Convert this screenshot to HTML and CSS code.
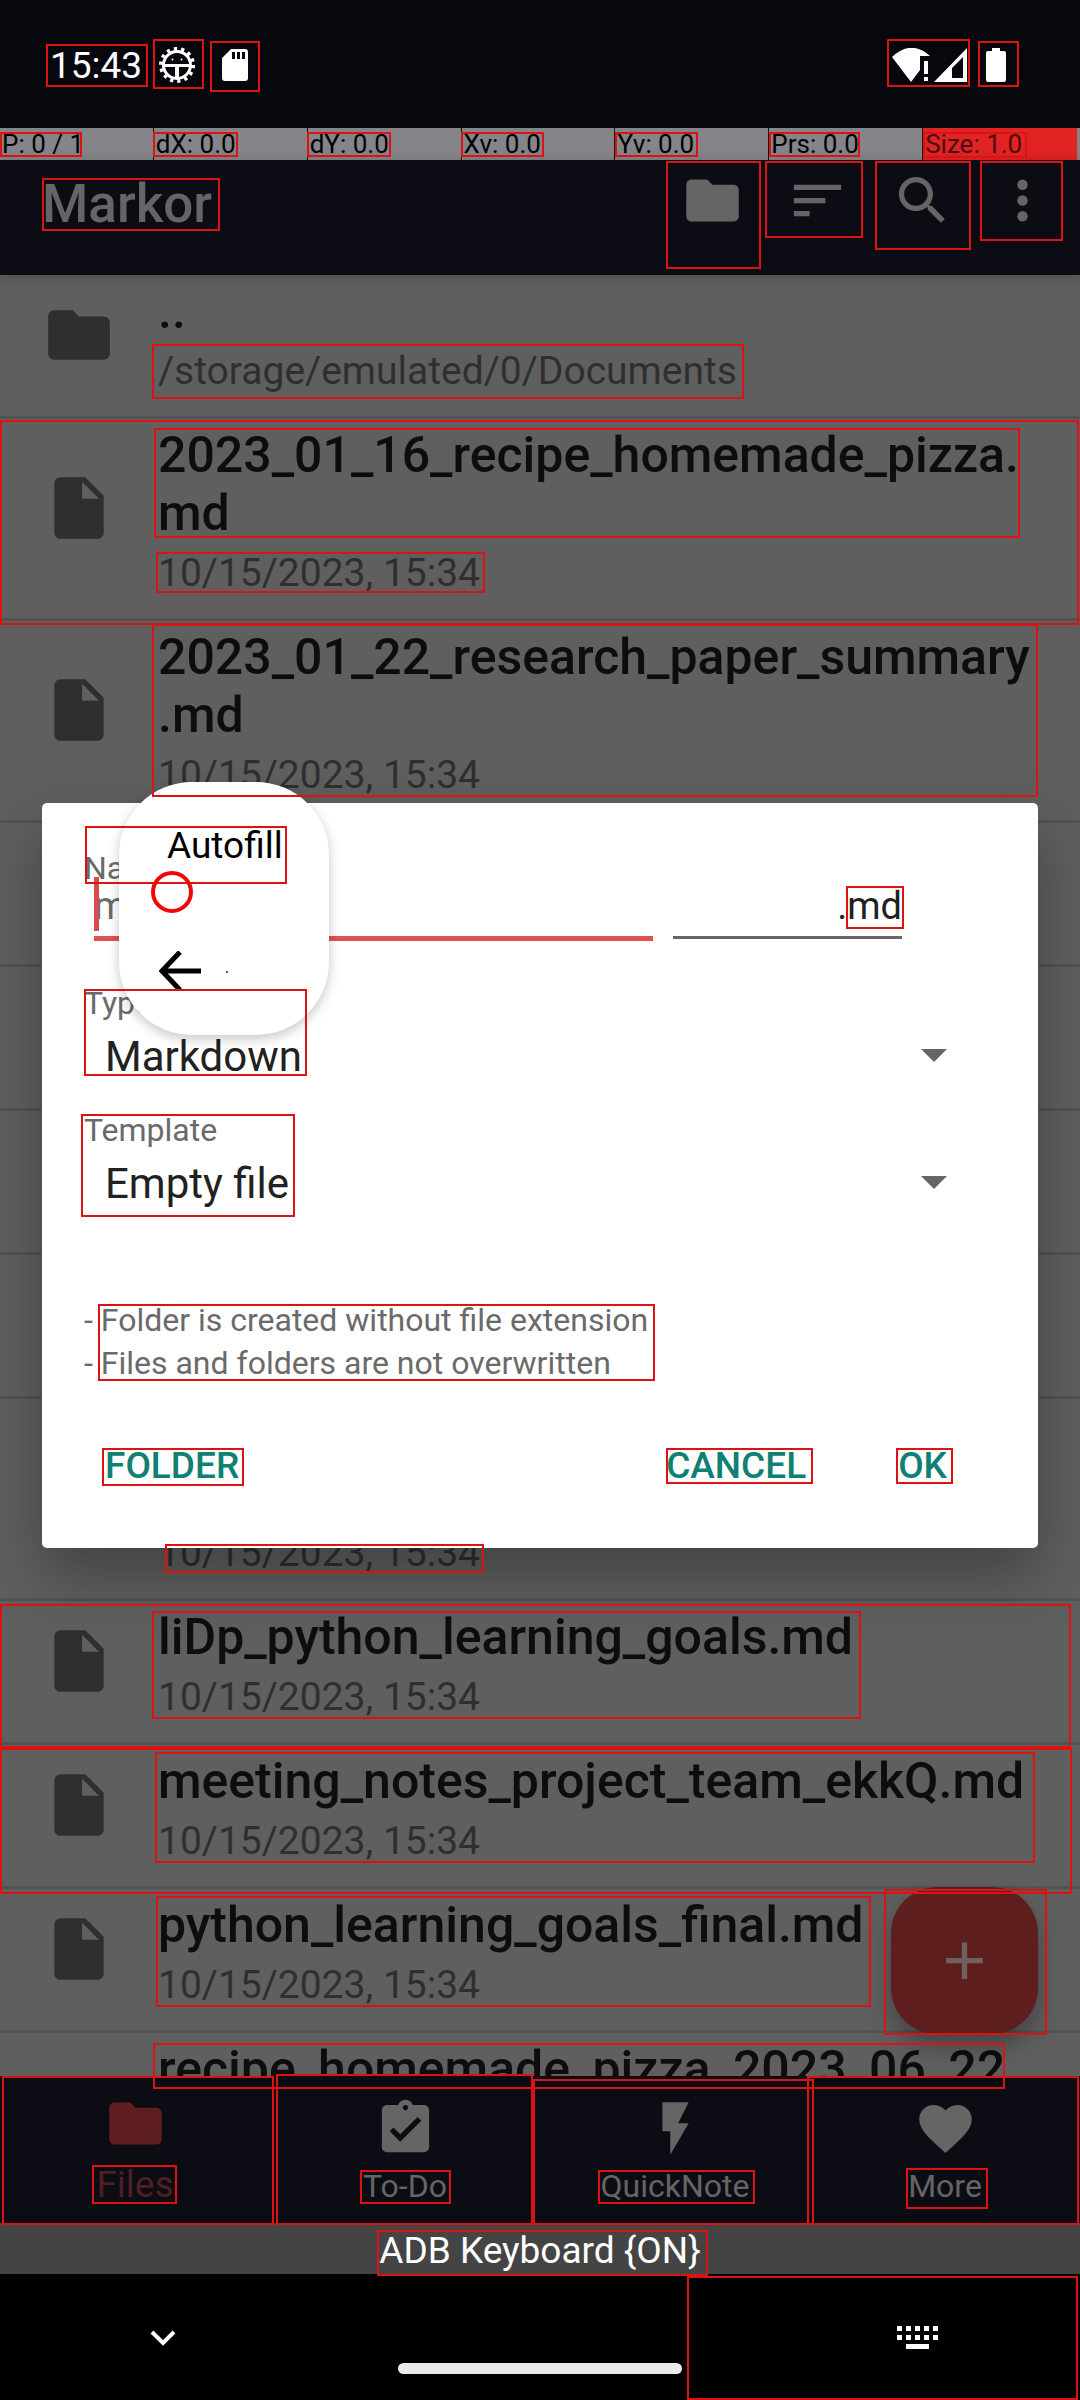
FILE: index.html
```html
<!DOCTYPE html>
<html lang="en">
<head>
<meta charset="utf-8">
<meta name="viewport" content="width=device-width">
<title>Markor</title>
<link rel="stylesheet" href="styles.css">
</head>
<body>
<svg class="defs" aria-hidden="true">
  <symbol id="folder" viewBox="0 0 24 24"><path d="M10 4H4c-1.100 0-1.990.900-1.990 2L2 18c0 1.100.900 2 2 2h16c1.100 0 2-.900 2-2V8c0-1.100-.900-2-2-2h-8l-2-2z"/></symbol>
  <symbol id="file" viewBox="0 0 24 24"><path fill-rule="evenodd" d="M6 2c-1.100 0-2 .900-2 2v16c0 1.100.900 2 2 2h12c1.100 0 2-.900 2-2V8l-6-6H6zm7 7V3.500L18.500 9H13z"/></symbol>
</svg>
<div class="screen">
  <header class="status">
    <div class="status-group">
      <time class="clock">15:43</time>
      <svg class="bug" viewBox="0 0 36 36">
        <circle cx="18" cy="18" r="13.500" fill="none" stroke="#fff" stroke-width="3"/>
        <circle cx="18" cy="18" r="16" fill="none" stroke="#fff" stroke-width="4" stroke-dasharray="3.200 3.980"/>
        <path d="M5 17h26v3H20v12h-4V20H5z" fill="#fff"/>
        <circle cx="13.500" cy="12.500" r="1" fill="#fff"/><circle cx="22.500" cy="12.500" r="1" fill="#fff"/>
      </svg>
      <svg class="card" viewBox="0 0 26 32"><path fill="#fff" fill-rule="evenodd" d="M9 0h14a3 3 0 0 1 3 3v26a3 3 0 0 1-3 3H3a3 3 0 0 1-3-3V9zM10 3v7h3V3zm5 0v7h3V3zm5 0v7h3V3z"/></svg>
    </div>
    <div class="status-group">
      <svg class="wifi" viewBox="0 0 38 34"><path fill="#fff" d="M0 9Q19-9 38 8H28v14l-9 12zM32 13h4v13h-4zM32 29h4v4h-4z"/></svg>
      <svg class="signal" viewBox="0 0 33 34"><path fill="#fff" fill-rule="evenodd" d="M33 0v34H0zM29 9L18 20v10h11z"/></svg>
      <svg class="battery" viewBox="0 0 20 34"><path fill="#fff" d="M6 0h8v3h4a2 2 0 0 1 2 2v27a2 2 0 0 1-2 2H2a2 2 0 0 1-2-2V5a2 2 0 0 1 2-2h4z"/></svg>
    </div>
  </header>

  <main class="app">
    <div class="pointer">
      <span>P: 0 / 1</span><span>dX: 0.0</span><span>dY: 0.0</span><span>Xv: 0.0</span><span>Yv: 0.0</span><span>Prs: 0.0</span><span class="pointer-hot">Size: 1.0</span>
    </div>
    <div class="appbar">
      <h1>Markor</h1>
      <button class="tool" aria-label="Go to"><svg class="icon" viewBox="0 0 24 24"><use href="#folder"/></svg></button>
      <button class="tool" aria-label="Sort"><svg class="icon" viewBox="0 0 24 24"><path d="M3 18h6v-2H3v2zM3 6v2h18V6H3zm0 7h12v-2H3v2z"/></svg></button>
      <button class="tool" aria-label="Search"><svg class="icon" viewBox="0 0 24 24"><path d="M15.500 14h-.790l-.280-.270C15.410 12.590 16 11.110 16 9.500 16 5.910 13.090 3 9.500 3S3 5.910 3 9.500 5.910 16 9.500 16c1.610 0 3.090-.590 4.230-1.570l.270.280v.790l5 4.990L20.490 19l-4.990-5zm-6 0C7.010 14 5 11.990 5 9.500S7.010 5 9.500 5 14 7.010 14 9.500 11.990 14 9.500 14z"/></svg></button>
      <button class="tool tool-more" aria-label="More options"><svg class="icon" viewBox="0 0 24 24"><circle cx="12" cy="6" r="2"/><circle cx="12" cy="12" r="2"/><circle cx="12" cy="18" r="2"/></svg></button>
    </div>

    <ul class="files">
      <li><svg class="file-icon"><use href="#folder"/></svg><div class="entry"><b>..</b><span>/storage/emulated/0/Documents</span></div></li>
      <li><svg class="file-icon"><use href="#file"/></svg><div class="entry"><b>2023_01_16_recipe_homemade_pizza.<br>md</b><span>10/15/2023, 15:34</span></div></li>
      <li><svg class="file-icon"><use href="#file"/></svg><div class="entry"><b>2023_01_22_research_paper_summary<br>.md</b><span>10/15/2023, 15:34</span></div></li>
      <li></li>
      <li></li>
      <li></li>
      <li></li>
      <li class="tall"><svg class="file-icon"><use href="#file"/></svg><div class="entry"><span>10/15/2023, 15:34</span></div></li>
      <li><svg class="file-icon"><use href="#file"/></svg><div class="entry"><b>liDp_python_learning_goals.md</b><span>10/15/2023, 15:34</span></div></li>
      <li><svg class="file-icon"><use href="#file"/></svg><div class="entry"><b>meeting_notes_project_team_ekkQ.md</b><span>10/15/2023, 15:34</span></div></li>
      <li><svg class="file-icon"><use href="#file"/></svg><div class="entry"><b>python_learning_goals_final.md</b><span>10/15/2023, 15:34</span></div></li>
      <li class="tall"><div class="entry entry-top"><b>recipe_homemade_pizza_2023_06_22</b></div></li>
    </ul>

    <nav class="tabs">
      <button class="tab tab-on"><svg class="icon" viewBox="0 0 24 24"><use href="#folder"/></svg><span>Files</span></button>
      <button class="tab"><svg class="icon" viewBox="0 0 24 24"><path d="M19 3h-4.180C14.400 1.840 13.300 1 12 1c-1.300 0-2.400.840-2.820 2H5c-1.100 0-2 .900-2 2v14c0 1.100.900 2 2 2h14c1.100 0 2-.900 2-2V5c0-1.100-.900-2-2-2zm-7 0c.550 0 1 .450 1 1s-.450 1-1 1-1-.450-1-1 .450-1 1-1zm-2 14l-4-4 1.410-1.410L10 14.170l6.590-6.590L18 9l-8 8z"/></svg><span>To-Do</span></button>
      <button class="tab"><svg class="icon" viewBox="0 0 24 24"><path d="M7 2v11h3v9l7-12h-4l4-8z"/></svg><span>QuickNote</span></button>
      <button class="tab"><svg class="icon" viewBox="0 0 24 24"><path d="M12 21.350l-1.450-1.320C5.400 15.360 2 12.280 2 8.500 2 5.420 4.420 3 7.500 3c1.740 0 3.410.810 4.500 2.090C13.090 3.810 14.760 3 16.500 3 19.580 3 22 5.420 22 8.500c0 3.780-3.400 6.860-8.550 11.540L12 21.350z"/></svg><span>More</span></button>
      <button class="fab" aria-label="New file"><svg class="icon" viewBox="0 0 24 24"><path d="M19 13h-6v6h-2v-6H5v-2h6V5h2v6h6v2z"/></svg></button>
    </nav>

    <div class="overlay">
      <form class="dialog">
        <label for="name">Name</label>
        <div class="name-row">
          <div class="name-field"><input id="name" type="text" placeholder="my_note"><i class="caret"></i></div>
          <input class="ext" type="text" value=".md" aria-label="Extension">
        </div>
        <label for="type">Type</label>
        <div class="select"><select id="type"><option>Markdown</option></select><svg viewBox="0 0 26 13"><path d="M0 0h26L13 13z"/></svg></div>
        <label for="template">Template</label>
        <div class="select"><select id="template"><option>Empty file</option></select><svg viewBox="0 0 26 13"><path d="M0 0h26L13 13z"/></svg></div>
        <p class="notes">- Folder is created without file extension<br>- Files and folders are not overwritten</p>
        <div class="actions">
          <button type="button" class="action-first">FOLDER</button>
          <button type="button">CANCEL</button>
          <button type="button">OK</button>
        </div>
        <div class="popup">
          <span>Autofill</span>
          <svg viewBox="0 0 70 40"><path d="M21 1L3 20l18 19M3 20h39" fill="none" stroke="#000" stroke-width="5"/><circle cx="68" cy="21" r="1" fill="#422"/></svg>
        </div>
      </form>
    </div>
  </main>

  <div class="ime">ADB Keyboard {ON}</div>
  <footer class="sysnav">
    <button aria-label="Hide keyboard"><svg class="chevron" viewBox="0 0 26 16"><path d="M2 2l11 11L24 2" fill="none" stroke="#fff" stroke-width="4"/></svg></button>
    <i class="pill"></i>
    <button aria-label="Switch keyboard"><svg class="keys" viewBox="0 0 41 23"><path fill="#fff" d="M0 0h5v5H0zM9 0h5v5H9zM18 0h5v5h-5zM27 0h5v5h-5zM36 0h5v5h-5zM0 9h5v5H0zM9 9h5v5H9zM18 9h5v5h-5zM27 9h5v5h-5zM36 9h5v5h-5zM9 18h23v5H9z"/></svg></button>
  </footer>

  <svg class="marks" aria-hidden="true">
    <rect x="47" y="45" width="100" height="41"/>
    <rect x="154" y="40" width="49" height="48"/>
    <rect x="211" y="42" width="48" height="49"/>
    <rect x="888" y="40" width="81" height="46"/>
    <rect x="979" y="42" width="39" height="44"/>
    <rect x="1" y="133" width="80" height="23"/>
    <rect x="154" y="133" width="83" height="23"/>
    <rect x="308" y="133" width="82" height="23"/>
    <rect x="462" y="133" width="81" height="23"/>
    <rect x="616" y="133" width="81" height="23"/>
    <rect x="770" y="133" width="89" height="23"/>
    <rect x="924" y="133" width="102" height="24"/>
    <rect x="43" y="179" width="176" height="51"/>
    <rect x="667" y="162" width="93" height="106"/>
    <rect x="766" y="162" width="96" height="75"/>
    <rect x="876" y="162" width="94" height="87"/>
    <rect x="981" y="162" width="81" height="78"/>
    <rect x="153" y="345" width="590" height="53"/>
    <rect x="1" y="421" width="1077" height="203"/>
    <rect x="155" y="429" width="864" height="108"/>
    <rect x="157" y="553" width="327" height="39"/>
    <rect x="153" y="625" width="884" height="171"/>
    <rect x="86" y="827" width="200" height="56"/>
    <circle cx="172" cy="892" r="19" class="touch"/>
    <rect x="85" y="990" width="221" height="85"/>
    <rect x="82" y="1115" width="212" height="101"/>
    <rect x="847" y="887" width="56" height="41"/>
    <rect x="99" y="1305" width="555" height="75"/>
    <rect x="103" y="1449" width="140" height="36"/>
    <rect x="667" y="1449" width="145" height="34"/>
    <rect x="897" y="1449" width="55" height="34"/>
    <rect x="166" y="1545" width="317" height="27"/>
    <rect x="1" y="1605" width="1069" height="142"/>
    <rect x="153" y="1612" width="707" height="106"/>
    <rect x="1" y="1749" width="1070" height="144"/>
    <rect x="156" y="1753" width="878" height="109"/>
    <rect x="157" y="1897" width="713" height="109"/>
    <rect x="885" y="1890" width="161" height="144"/>
    <rect x="154" y="2044" width="850" height="44"/>
    <rect x="3" y="2077" width="270" height="147"/>
    <rect x="277" y="2075" width="255" height="149"/>
    <rect x="534" y="2080" width="279" height="144"/>
    <rect x="808" y="2077" width="270" height="147"/>
    <rect x="93" y="2166" width="83" height="37"/>
    <rect x="361" y="2171" width="89" height="32"/>
    <rect x="599" y="2171" width="155" height="32"/>
    <rect x="907" y="2169" width="80" height="39"/>
    <rect x="378" y="2231" width="329" height="44"/>
    <rect x="688" y="2277" width="389" height="122"/>
  </svg>
</div>
</body>
</html>
```
FILE: styles.css
```css
* { box-sizing: border-box; }
body { margin: 0; font-family: Roboto, sans-serif; background: #000; }
button, input, select { font: inherit; color: inherit; border: 0; padding: 0; margin: 0; background: none; border-radius: 0; outline: 0; }
svg { display: block; fill: currentColor; }
.defs { position: absolute; width: 0; height: 0; }

.screen { position: relative; display: flex; flex-direction: column; height: 100vh; overflow: hidden; }

/* system status bar */
.status { display: flex; justify-content: space-between; height: 128px; padding: 44px 74px 0 50px; background: #07080d; color: #fff; }
.status-group { display: flex; align-items: center; height: 42px; }
.clock { width: 109px; padding-top: 2px; font-size: 37px; line-height: 44px; }
.bug { width: 36px; height: 36px; }
.card { width: 26px; height: 32px; margin-left: 27px; }
.wifi { width: 38px; height: 34px; }
.signal { width: 33px; height: 34px; margin: 0 19px 0 4px; }
.battery { width: 20px; height: 34px; }

.app { position: relative; flex: 1; min-height: 0; display: flex; flex-direction: column; }

/* pointer location readout */
.pointer { display: grid; grid-template-columns: repeat(7, 1fr); height: 32px; padding-right: 3px; background: #858589; color: #000; font-size: 26px; line-height: 33px; }
.pointer span { padding-left: 2px; border-right: 1px solid #111218; white-space: nowrap; }
.pointer .pointer-hot { background: #e12323; border-color: #e12323; color: #4d0d10; }

.appbar { position: relative; z-index: 1; display: flex; height: 115px; padding: 0 10px 0 42px; background: #0c0d14; color: #656565; box-shadow: 0 2px 12px rgba(0, 0, 0, .2); }
.appbar h1 { flex: 1; margin: 13px 0 0; font-size: 53px; line-height: 62px; font-weight: 500; }
.icon { width: 63px; height: 63px; }
.tool { display: flex; justify-content: center; width: 105px; padding-top: 9px; }
.tool-more { width: 95px; }

/* file list */
.files { flex: 1; min-height: 0; overflow: hidden; margin: 0; padding: 0; list-style: none; background: #5f5f5f; }
.files li { display: flex; align-items: center; min-height: 144px; padding: 0 0 21px 42px; border-bottom: 3px solid #535353; }
.files .tall { min-height: 202px; }
.file-icon { width: 74px; height: 74px; color: #2f2f2f; }
.entry { display: flex; flex-direction: column; gap: 8px; padding: 7px 0 1px; margin-left: 42px; color: #2f2f2f; font-size: 39px; line-height: 46px; }
.entry b { color: #0d0d0d; font-size: 50px; line-height: 58px; font-weight: 500; white-space: nowrap; }
.tall .entry { align-self: flex-end; }
.tall .entry-top { align-self: flex-start; margin-left: 116px; }

.tabs { position: relative; z-index: 1; display: grid; grid-template-columns: repeat(4, 1fr); height: 147px; background: #0c0d14; color: #656565; }
.tab { display: flex; flex-direction: column; align-items: center; justify-content: space-between; padding: 21px 0 18px; font-size: 32px; line-height: 38px; }
.tab-on { padding: 16px 0 17px; color: #5f1e20; }
.tab-on span { font-size: 37px; line-height: 42px; color: #4f1f23; }
.fab { position: absolute; right: 42px; bottom: 189px; display: grid; place-items: center; width: 147px; height: 147px; border-radius: 46px; background: #5f1e1e; color: #6c6060; box-shadow: 0 12px 24px rgba(0, 0, 0, .3); }

/* new file dialog */
.overlay { position: absolute; inset: 0; z-index: 2; display: flex; align-items: center; padding: 0 42px; }
.dialog { position: relative; flex: 1; display: flex; flex-direction: column; padding: 49px 42px 60px; border-radius: 5px; background: #fff; color: #212121; font-size: 42px; line-height: 42px; box-shadow: 0 28px 60px rgba(0, 0, 0, .3); }
.dialog label { color: #6a6a6a; font-size: 32px; line-height: 32px; }
.name-row { display: grid; grid-template-columns: 22fr 9fr; gap: 20px; height: 57px; margin-bottom: 46px; padding: 0 94px 0 10px; align-items: start; font-size: 38px; }
.name-row input { display: block; width: 100%; height: 57px; padding-bottom: 8px; border-bottom: 5px solid #e05252; }
.name-row input::placeholder { color: #6a6a6a; opacity: 1; }
.name-row .ext { height: 55px; padding-bottom: 8px; border-bottom: 3px solid #666; text-align: right; }
.name-field { position: relative; }
.caret { position: absolute; left: 0; top: -7px; width: 5px; height: 54px; background: #d94c4c; }
.select { display: grid; align-items: center; margin: 12px 0 31px; }
.select select, .select svg { grid-area: 1 / 1; }
.select select { appearance: none; height: 52px; padding-left: 21px; line-height: 52px; }
.select svg { justify-self: end; width: 26px; height: 13px; margin: 0 49px 4px 0; color: #666; }
.notes { margin: 58px 0 59px; color: #6a6a6a; font-size: 32px; line-height: 43px; }
.actions { display: flex; gap: 92px; padding: 0 49px 0 21px; color: #0f8072; font-size: 37px; line-height: 44px; font-weight: 500; }
.action-first { margin-right: auto; }

.popup { position: absolute; left: 77px; top: -21px; width: 210px; height: 253px; padding: 42px 31px 0 40px; border-radius: 73px; background: #fff; color: #000; box-shadow: 0 4px 12px rgba(0, 0, 0, .22); }
.popup span { display: block; padding-left: 8px; font-size: 37px; line-height: 44px; }
.popup svg { width: 70px; height: 40px; margin-top: 83px; }

/* input method strip and system navigation */
.ime { background: #444; color: #fff; font-size: 37px; line-height: 49px; height: 51px; padding-top: 3px; text-align: center; }
.sysnav { display: grid; grid-template-columns: 1fr 284px 1fr; height: 126px; background: #000; }
.sysnav button { display: flex; padding-top: 52px; }
.chevron { width: 26px; height: 16px; margin: 4px 0 0 150px; }
.pill { height: 11px; margin-top: 89px; border-radius: 6px; background: #ebebeb; }
.sysnav .keys { width: 41px; height: 23px; margin-left: auto; margin-right: 142px; }

/* bounds overlay */
.marks { position: absolute; inset: 0; z-index: 5; width: 100%; height: 100%; fill: none; stroke: #dd1212; stroke-width: 2; pointer-events: none; }
.touch { stroke: #f40606; stroke-width: 4; }
```
